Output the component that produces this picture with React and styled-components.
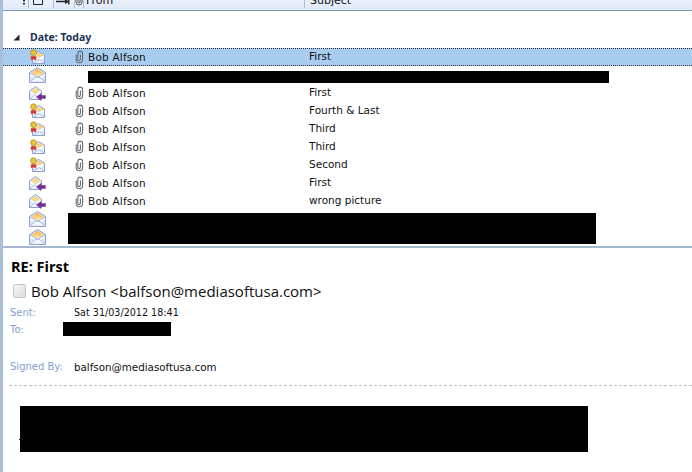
import React from "react";
import styled, { createGlobalStyle } from "styled-components";

const Global = createGlobalStyle`
  html, body { margin: 0; padding: 0; background: #fff; }
  body { font-family: "DejaVu Sans", Verdana, sans-serif; overflow: hidden; }
`;

const Page = styled.div`
  position: relative;
  width: 692px;
  height: 472px;
  overflow: hidden;
  background: #fff;
  box-sizing: border-box;
  border-left: 3px solid #a9bfd9;
`;

const Header = styled.div`
  height: 10px;
  display: flex;
  background: linear-gradient(#eaf1fb, #e0e9f8);
  border-bottom: 1px solid #7f9cbd;
  overflow: hidden;
`;

const HeadCell = styled.div`
  flex: ${(p) => (p.$grow ? 1 : 0)} 0 ${(p) => p.$w}px;
  height: 8px;
  box-sizing: border-box;
  border-right: ${(p) => (p.$last ? "none" : "1px solid #a9bdd6")};
  display: flex;
  justify-content: ${(p) => p.$justify || "flex-start"};
  padding-left: ${(p) => p.$pad || 0}px;
  padding-right: ${(p) => p.$padR || 0}px;
`;

const HeadLabel = styled.span`
  font-family: "DejaVu Sans", sans-serif;
  font-size: 11px;
  line-height: 14px;
  margin-top: -6px;
  color: #111;
  white-space: nowrap;
`;

const Group = styled.div`
  margin-top: 17px;
  height: 20px;
  box-sizing: border-box;
  padding: 0 0 2px 10px;
  display: flex;
  align-items: center;
  gap: 10px;
  font: bold 10.5px "Noto Sans", sans-serif;
  color: #1a3357;
`;

const Rows = styled.div`
  position: relative;
  height: 198px;
`;

const Row = styled.div`
  height: 18px;
  box-sizing: border-box;
  display: grid;
  grid-template-columns: 26px 46px 13px 221px 1fr;
  align-items: center;
  font-size: 10.5px;
  color: #111;
  white-space: nowrap;
  background: ${(p) => (p.$sel ? "#a8cdf0" : "transparent")};
  border-top: ${(p) => (p.$sel ? "1px dotted #333" : "none")};
  border-bottom: ${(p) => (p.$sel ? "1px dotted #333" : "none")};
`;

const Spacer = styled.span``;
const IconSlot = styled.span`
  display: flex;
  align-items: center;
`;

const FromText = styled.span`
  letter-spacing: 0.2px;
`;

const SubjectText = styled.span`
  padding-bottom: 2px;
`;

const Redact = styled.div`
  position: absolute;
  background: #000;
  left: ${(p) => p.$x}px;
  top: ${(p) => p.$y}px;
  width: ${(p) => p.$w}px;
  height: ${(p) => p.$h}px;
`;

const Pane = styled.div`
  position: relative;
  border-top: 2px solid #a4b8d2;
  padding: 10px 0 0 8px;
`;

const Subject = styled.div`
  font: bold 14.5px/18px "Open Sans", "DejaVu Sans", sans-serif;
  color: #000;
`;

const Sender = styled.div`
  display: flex;
  align-items: center;
  gap: 5px;
  margin: 6px 0 0 2px;
  font: 15px/18px "Open Sans", "DejaVu Sans", sans-serif;
  color: #111;
`;

const Check = styled.span`
  width: 11px;
  height: 12px;
  border: 1px solid #c4c4c4;
  border-radius: 2px;
  background: linear-gradient(135deg, #f6f6f6, #dcdcdc);
`;

const Meta = styled.div`
  display: grid;
  grid-template-columns: 64px 1fr;
  height: ${(p) => p.$h}px;
  margin: ${(p) => p.$mt || 0}px 0 0 -1px;
  align-items: center;
  font-size: 10px;
  color: #111;
`;

const MetaLabel = styled.span`
  color: #7f9fd0;
`;

const MetaValue = styled.span`
  font-size: ${(p) => p.$size}px;
`;

const Dash = styled.div`
  border-top: 1px dashed #c4c4c4;
  margin: 10px 0 0 -2px;
`;

const Speck = styled.div`
  position: absolute;
  left: 16px;
  top: 191px;
  width: 2px;
  height: 1px;
  background: #222;
`;

const Clip = () => (
  <svg width="9" height="14" viewBox="0 0 9 14" fill="none">
    <path d="M1.2 4.5V9.5A3.2 3.2 0 0 0 7.6 9.5V3.5A2.4 2.4 0 0 0 2.8 3.5V9.3A1.3 1.3 0 0 0 5.4 9.3V4.5" stroke="#666c75" strokeWidth="1.1" />
  </svg>
);

const OpenMail = () => (
  <svg width="17" height="16" viewBox="0 0 17 16">
    <defs>
      <linearGradient id="flap" x1="0" y1="0" x2="0" y2="1">
        <stop offset="0" stopColor="#f6b34a" />
        <stop offset="1" stopColor="#fde6a8" />
      </linearGradient>
    </defs>
    <path d="M0.5 5.5L8.5 0.5L16.5 5.5V15.5H0.5Z" fill="#dbe6f8" stroke="#8f9fd0" />
    <path d="M2 6L8.5 1.7L15 6L8.5 9.5Z" fill="url(#flap)" />
    <path d="M1.5 6.5L8.5 10.5L15.5 6.5V9L8.5 12L1.5 9Z" fill="#fff" />
    <path d="M1.5 14.5L7 10H10L15.5 14.5" fill="#f5f8fe" stroke="#a9bce6" />
    <path d="M1 6L8.5 10.5L16 6" fill="none" stroke="#a9bce6" />
  </svg>
);

const SealMail = () => (
  <svg width="17" height="16" viewBox="0 0 17 16">
    <path d="M3.5 6L9.5 2.5L15.5 6V14.5H3.5Z" fill="#dfe9fa" stroke="#8f9fd0" />
    <path d="M7 5.5L10 3.8L14.5 6.5L10 9Z" fill="#fbd27a" />
    <path d="M7 9.5L10 9L14.5 6.8V9L10 11Z" fill="#fff" />
    <path d="M5 14L10 10.5L15 14" fill="#f3f7fe" stroke="#a9bce6" />
    <circle cx="4.5" cy="3.7" r="2.9" fill="#e8c43e" stroke="#a98a1c" strokeWidth=".7" />
    <path d="M1.8 7.3H7.2V10L6.3 11.6L4.5 10L2.7 11.6L1.8 10Z" fill="#d83b28" />
  </svg>
);

const ReplyMail = () => (
  <svg width="17" height="16" viewBox="0 0 17 16">
    <path d="M0.5 6L6.5 1.5L12.5 6V14.5H0.5Z" fill="#e4edfb" stroke="#8f9fd0" />
    <path d="M2 6L6.5 2.8L11 6L6.5 9Z" fill="#fad884" />
    <path d="M1.5 7L6.5 10L11.5 7V8.5L6.5 11L1.5 8.5Z" fill="#fff" />
    <path d="M1 14L5.5 10L9 12.5" fill="#f3f7fe" stroke="#a9bce6" />
    <path d="M7.5 12L12 8.5V10.5H16.5V13.5H12V15.5Z" fill="#7a2e9e" stroke="#5e2078" strokeWidth=".4" />
  </svg>
);

const rows = [
  { I: SealMail, s: "First", sel: true },
  { I: OpenMail, hidden: true },
  { I: ReplyMail, s: "First" },
  { I: SealMail, s: "Fourth & Last" },
  { I: SealMail, s: "Third" },
  { I: SealMail, s: "Third" },
  { I: SealMail, s: "Second" },
  { I: ReplyMail, s: "First" },
  { I: ReplyMail, s: "wrong picture" },
  { I: OpenMail, hidden: true },
  { I: OpenMail, hidden: true },
];

export default function App() {
  return (
    <Page>
      <Global />
      <Header>
        <HeadCell $w={26} $justify="flex-end" $padR={3}>
          <svg width="2" height="5" viewBox="0 0 2 5"><path d="M0 0H2V1.5H0ZM0 3H2V4.5H0Z" fill="#222" /></svg>
        </HeadCell>
        <HeadCell $w={25} $pad={4}>
          <svg width="10" height="5" viewBox="0 0 10 5"><path d="M0.5 0V4.5H9.5V0" fill="none" stroke="#222" /></svg>
        </HeadCell>
        <HeadCell $w={21} $pad={2}>
          <svg width="14" height="6" viewBox="0 0 14 6"><path d="M0 1.5H11M9 0L12 1.5L9 3.5" fill="none" stroke="#222" strokeWidth="1.3" /><path d="M12.8 0V4.5" stroke="#222" strokeWidth="1.4" /></svg>
        </HeadCell>
        <HeadCell $w={9} $pad={0}>
          <svg width="8" height="6" viewBox="0 0 8 6"><path d="M1 0V2A3 3 0 0 0 7 2V0M3 0V2A1 1 0 0 0 5 2V0" fill="none" stroke="#555" /></svg>
        </HeadCell>
        <HeadCell $w={221} $pad={2}><HeadLabel>From</HeadLabel></HeadCell>
        <HeadCell $w={300} $grow $last $pad={5}><HeadLabel>Subject</HeadLabel></HeadCell>
      </Header>
      <Group>
        <svg width="7" height="7" viewBox="0 0 7 7"><path d="M6.5 0.5V6.5H0.5Z" fill="#222" /></svg>
        Date: Today
      </Group>
      <Rows>
        {rows.map((r, i) => (
          <Row key={i} $sel={r.sel}>
            <Spacer />
            <IconSlot><r.I /></IconSlot>
            <IconSlot>{!r.hidden && <Clip />}</IconSlot>
            <FromText>{r.hidden ? "" : "Bob Alfson"}</FromText>
            <SubjectText>{r.s || ""}</SubjectText>
          </Row>
        ))}
        <Redact $x={85} $y={23} $w={521} $h={12} />
        <Redact $x={65} $y={165} $w={528} $h={31} />
      </Rows>
      <Pane>
        <Subject>RE: First</Subject>
        <Sender><Check />Bob Alfson &lt;balfson@mediasoftusa.com&gt;</Sender>
        <Meta $h={17} $mt={4}><MetaLabel>Sent:</MetaLabel><MetaValue $size={9.6}>Sat 31/03/2012 18:41</MetaValue></Meta>
        <Meta $h={17}><MetaLabel>To:</MetaLabel><span /></Meta>
        <Meta $h={17} $mt={20}><MetaLabel>Signed By:</MetaLabel><MetaValue $size={10.3}>balfson@mediasoftusa.com</MetaValue></Meta>
        <Dash />
        <Redact $x={60} $y={74} $w={108} $h={14} />
        <Speck />
        <Redact $x={17} $y={158} $w={568} $h={46} />
      </Pane>
    </Page>
  );
}
